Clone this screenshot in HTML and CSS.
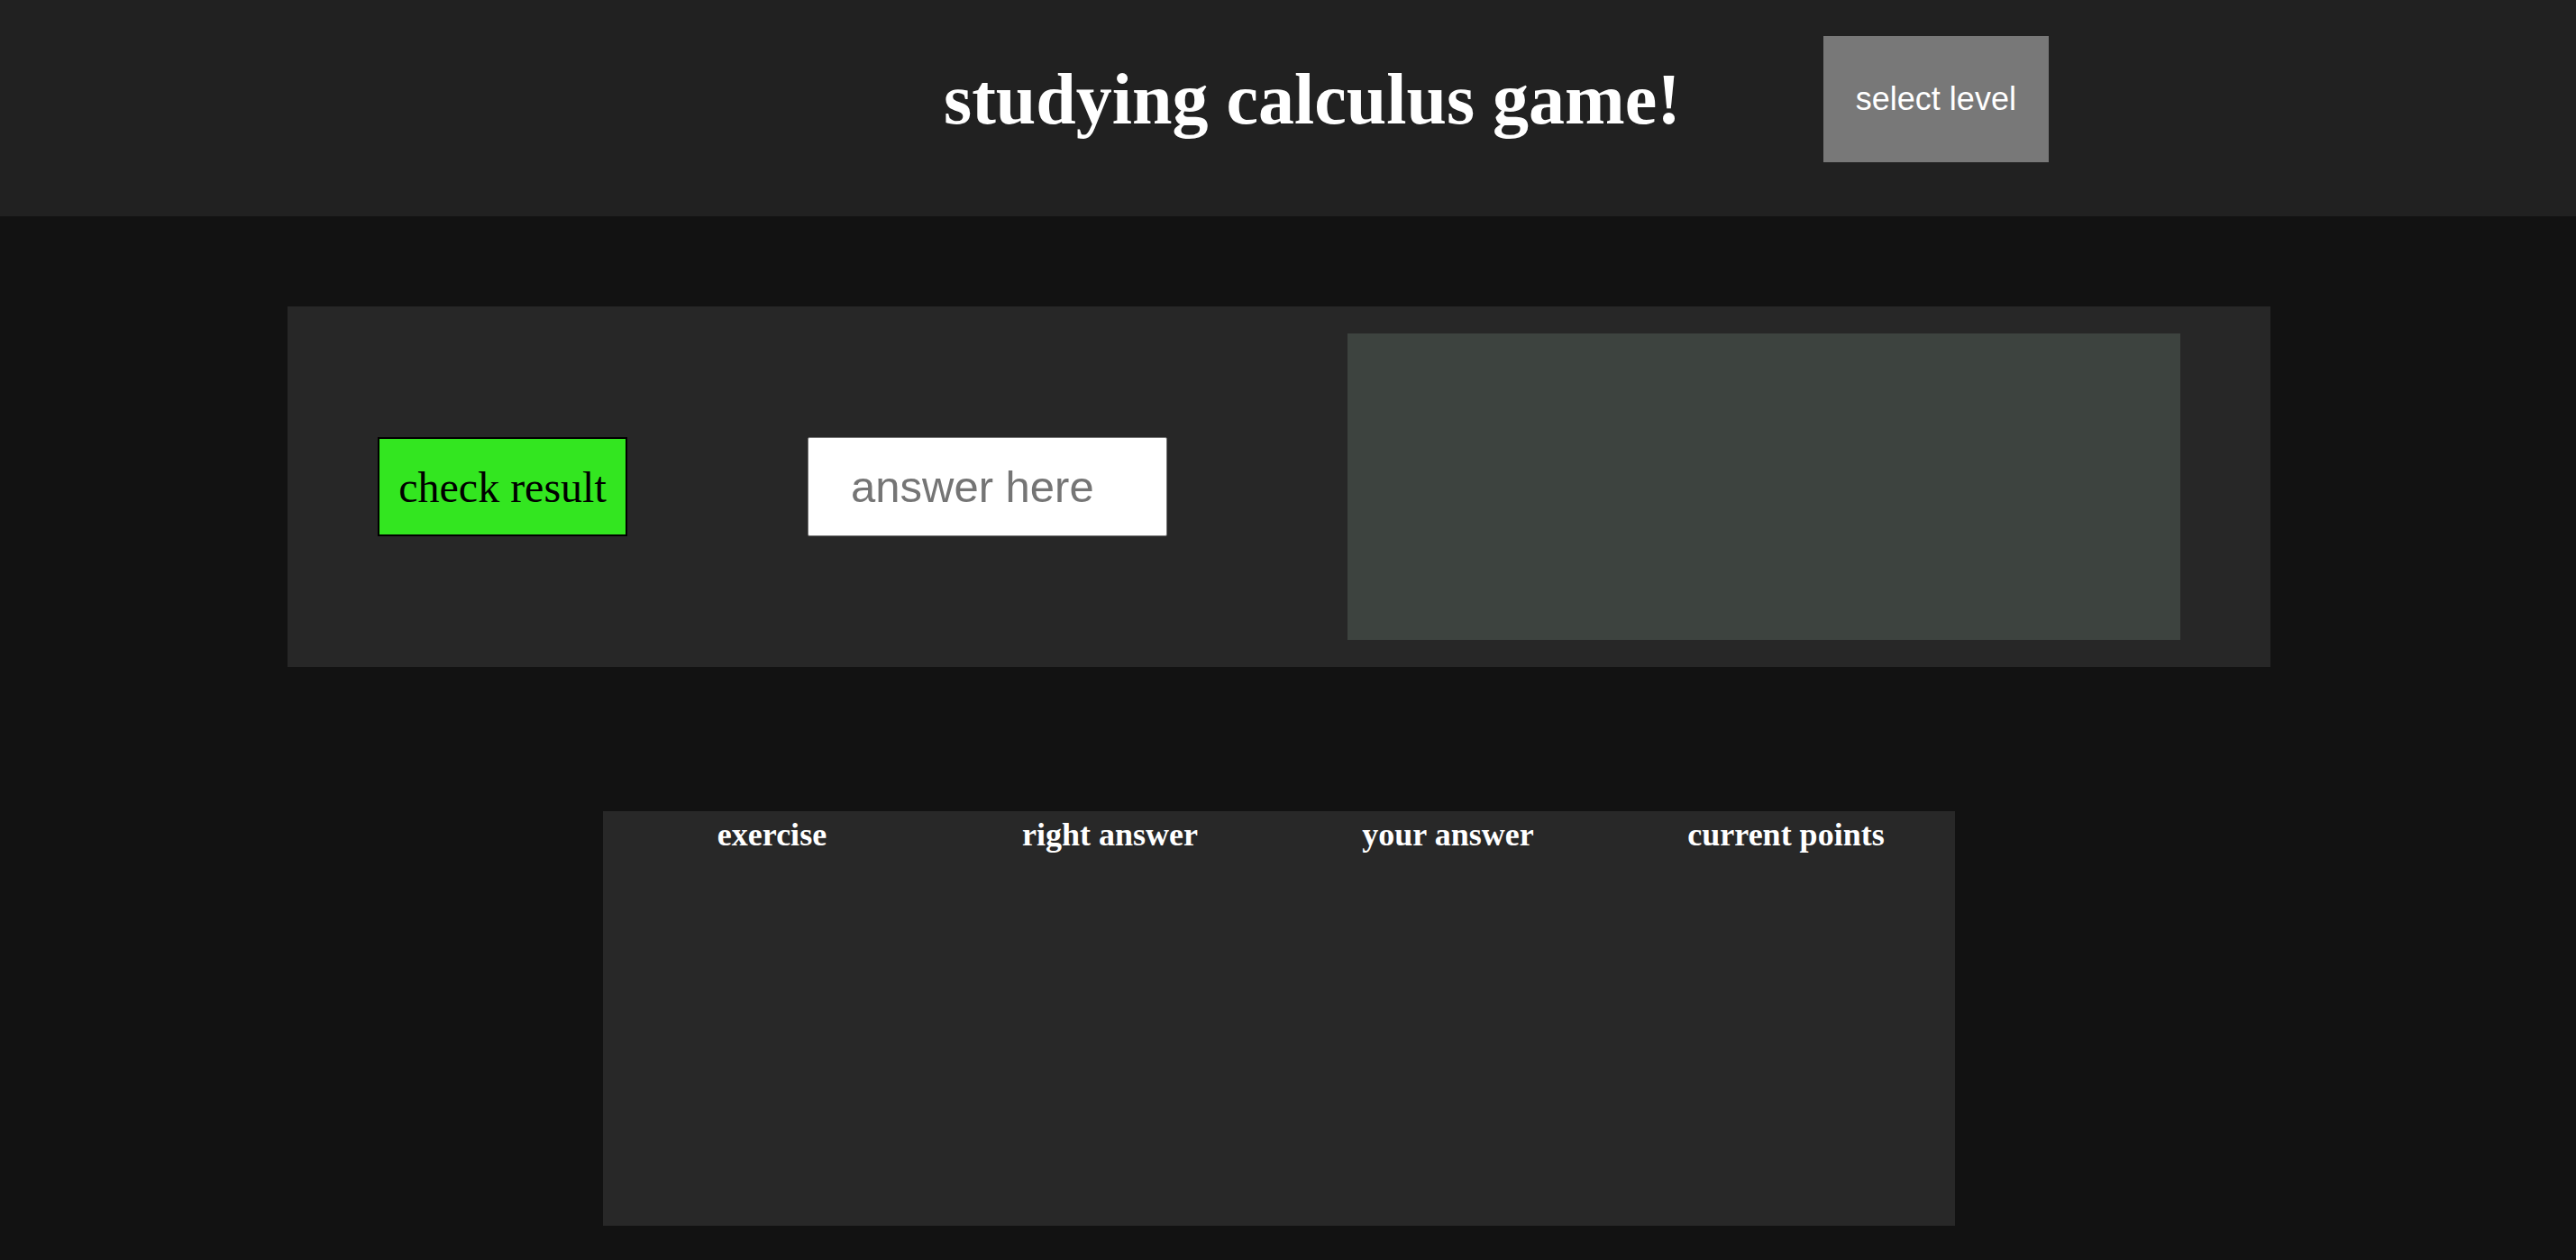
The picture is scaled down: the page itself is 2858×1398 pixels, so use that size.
FILE: index.html
```html
<!DOCTYPE html>
<html lang="en">
<head>
<meta charset="utf-8">
<title>studying calculus game</title>
<link rel="stylesheet" href="styles.css">
</head>
<body>
<header class="top-bar">
  <h1 class="title">studying calculus game!</h1>
  <button class="level-btn">select level</button>
</header>
<main class="main">
  <section class="play-panel">
    <button class="check-btn">check result</button>
    <input class="answer-input" type="text" placeholder="answer here">
    <div class="exercise-box"></div>
  </section>
  <section class="score-table">
    <div class="col-head">exercise</div>
    <div class="col-head">right answer</div>
    <div class="col-head">your answer</div>
    <div class="col-head">current points</div>
  </section>
</main>
</body>
</html>
```

FILE: styles.css
```css
html, body {
  margin: 0;
  padding: 0;
  background: #121212;
  font-family: "Liberation Serif", "Times New Roman", serif;
}

.top-bar {
  background: #212121;
  height: 240px;
  box-sizing: border-box;
  padding: 40px 0 60px 1047px;
  display: flex;
  align-items: center;
}

.title {
  margin: 0;
  color: #ffffff;
  font-size: 80px;
  font-weight: bold;
  font-family: "Liberation Serif", "Times New Roman", serif;
}

.level-btn {
  margin-left: 158px;
  width: 250px;
  height: 140px;
  background: #787878;
  color: #ffffff;
  border: none;
  font-family: "Liberation Sans", Arial, sans-serif;
  font-size: 36px;
  padding: 0;
}

.main {
  display: flex;
  flex-direction: column;
  align-items: center;
  padding: 100px 20px 0 0;
}

.play-panel {
  width: 2200px;
  height: 400px;
  box-sizing: border-box;
  background: #272727;
  padding: 30px 100px;
  display: flex;
  align-items: center;
  gap: 200px;
}

.check-btn {
  width: 277px;
  height: 110px;
  box-sizing: border-box;
  background: #33e620;
  border: 2px solid #000000;
  color: #000000;
  font-family: "Liberation Serif", "Times New Roman", serif;
  font-size: 48px;
  padding: 0;
  flex: none;
}

.answer-input {
  width: 399px;
  height: 110px;
  box-sizing: border-box;
  border: 1px solid #767676;
  border-radius: 2px;
  background: #ffffff;
  padding: 0 20px 0 47px;
  font-family: "Liberation Sans", Arial, sans-serif;
  font-size: 49px;
  color: #000000;
  flex: none;
  outline: none;
}

.answer-input::placeholder {
  color: #757575;
}

.exercise-box {
  flex: 1;
  height: 340px;
  background: #3d433f;
}

.score-table {
  margin-top: 160px;
  width: 1500px;
  height: 460px;
  background: #282828;
  display: grid;
  grid-template-columns: repeat(4, 1fr);
  align-content: start;
  padding-top: 5px;
  box-sizing: border-box;
}

.col-head {
  text-align: center;
  color: #ffffff;
  font-weight: bold;
  font-size: 36px;
}
```
